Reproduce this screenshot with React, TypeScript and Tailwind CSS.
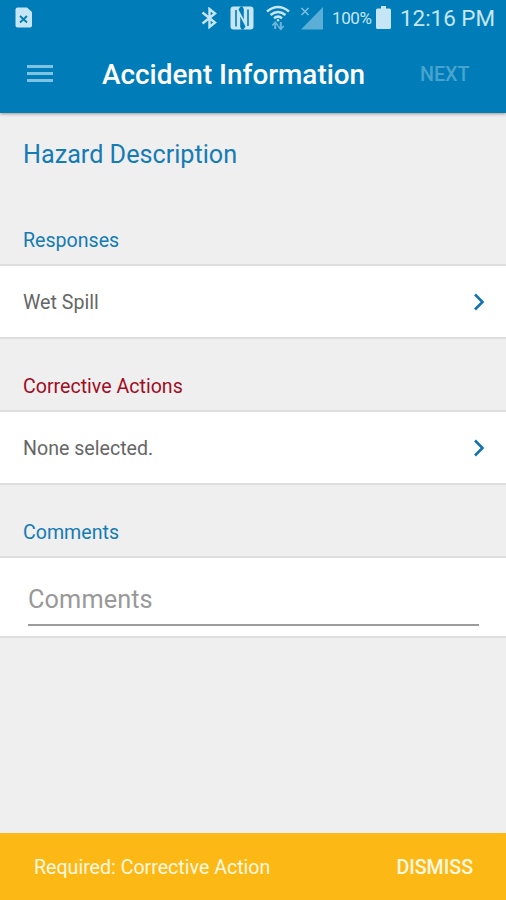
import React from "react";

function StatusBar() {
  return (
    <div className="flex h-9 items-center text-[#c6e6f6]">
      <svg className="ml-[15px] -mt-px h-[21px] w-[17px]" viewBox="0 0 17 21" aria-hidden="true">
        <path d="M2.5 0.5H12L17 5V18.5Q17 20.5 15 20.5H2.5Q0.5 20.5 0.5 18.5V2.5Q0.5 0.5 2.5 0.5Z" fill="currentColor" />
        <path d="M5 9L12 15.5M12 9L5 15.5" stroke="#007db8" strokeWidth="1.8" />
      </svg>
      <svg className="ml-[169px] -mt-px h-[22px] w-4" viewBox="0 0 16 22" fill="none" stroke="currentColor" strokeWidth="2.4" aria-hidden="true">
        <path d="M1.5 5.5L14 15.5L8.5 20V2L14 6.5L1.5 16.5" />
      </svg>
      <svg className="ml-[13px] -mt-px h-6 w-6" viewBox="0 0 24 24" aria-hidden="true">
        <rect x="0.5" y="0.5" width="23" height="23" rx="3" fill="currentColor" />
        <path d="M6 4V20.5M18 3.5V20" stroke="#007db8" strokeWidth="1.6" />
        <path d="M10.2 10.5L15.5 20.5L13.5 23.5H11.5L10.2 21Z" fill="#007db8" />
        <path d="M13.8 13.5L8.5 3.5L10.5 0.5H12.5L13.8 3Z" fill="#007db8" />
      </svg>
      <svg className="ml-[12px] -mt-px h-[26px] w-6" viewBox="0 0 24 26" fill="none" stroke="currentColor" aria-hidden="true">
        <path d="M1 6.5Q12 -2.5 23 6.5M4.5 10Q12 4 19.5 10M8 13.3Q12 10 16 13.3" strokeWidth="2.5" />
        <circle cx="12" cy="15.3" r="1.2" fill="currentColor" stroke="none" />
        <g opacity="0.55">
          <path d="M9.2 24V18M14.8 17V23" strokeWidth="2" />
          <path d="M6.3 20.5L9.2 17.3L12 20.5M12 21L14.8 24.2L17.7 21" strokeWidth="1.6" />
        </g>
      </svg>
      <svg className="ml-[10px] -mt-px h-6 w-6" viewBox="0 0 24 24" aria-hidden="true">
        <path d="M23 1V23.5H1Z" fill="#5bafd6" />
        <path d="M1.5 2L8.5 9M8.5 2L1.5 9" stroke="#7dc0df" strokeWidth="1.5" />
      </svg>
      <span className="ml-[8px] w-[41px] whitespace-nowrap text-[17px] leading-6 tracking-[-0.4px]">100%</span>
      <svg className="ml-[3px] -mt-px h-[23px] w-[15px]" viewBox="0 0 15 23" fill="currentColor" aria-hidden="true">
        <path d="M5 0H10V2.5H13.5Q15 2.5 15 4V21.5Q15 23 13.5 23H1.5Q0 23 0 21.5V4Q0 2.5 1.5 2.5H5Z" />
      </svg>
      <span className="ml-[9px] whitespace-nowrap text-[22.4px] leading-7">12:16 PM</span>
    </div>
  );
}

function Header() {
  return (
    <header className="relative z-10 h-[113px] shrink-0 bg-[#007db8] shadow-[0_1px_3px_rgba(70,30,20,0.45)]">
      <StatusBar />
      <div className="flex h-[77px] items-center">
        <button aria-label="Menu" className="ml-[27px] -mt-0.5 flex w-[26px] flex-col gap-1">
          <span className="h-[3px] bg-[#80c2e2]" />
          <span className="h-[3px] bg-[#80c2e2]" />
          <span className="h-[3px] bg-[#80c2e2]" />
        </button>
        <h1 className="ml-[49px] mt-px w-[270px] whitespace-nowrap text-[27.9px] font-medium leading-8 text-white">Accident Information</h1>
        <button className="ml-[48px] text-[19.7px] font-medium leading-6 text-[#48a3ce]">NEXT</button>
      </div>
    </header>
  );
}

function SectionLabel({ children, required = false }: { children: React.ReactNode; required?: boolean }) {
  return (
    <h3 className={`flex h-[71px] items-end px-[23px] pb-[9px] text-[19.6px] leading-7 ${required ? "text-[#a00d24]" : "text-[#147bb5]"}`}>
      {children}
    </h3>
  );
}

function SelectRow({ children }: { children: React.ReactNode }) {
  return (
    <div className="flex h-[75px] items-center justify-between border-y-2 border-[#dedede] bg-white pl-[23px] pr-[21px] text-[19.6px] text-[#666]">
      <span className="pt-0.5">{children}</span>
      <svg className="h-[18px] w-3" viewBox="0 0 12 18" fill="none" stroke="#1273b2" strokeWidth="2.6" aria-hidden="true">
        <path d="M2 1.5L9.5 9L2 16.5" />
      </svg>
    </div>
  );
}

export default function App() {
  return (
    <div className="flex h-[900px] w-[506px] flex-col overflow-hidden bg-[#efefef] font-[Roboto,sans-serif]">
      <Header />
      <main className="flex-1">
        <h2 className="h-[80px] px-[23px] pt-[26px] text-[25.2px] leading-8 text-[#147bb5]">Hazard Description</h2>
        <SectionLabel>Responses</SectionLabel>
        <SelectRow>Wet Spill</SelectRow>
        <SectionLabel required>Corrective Actions</SectionLabel>
        <SelectRow>None selected.</SelectRow>
        <SectionLabel>Comments</SectionLabel>
        <div className="h-[82px] border-y-2 border-[#dedede] bg-white px-7 pt-[22px]">
          <input
            aria-label="Comments"
            placeholder="Comments"
            className="block h-[46px] w-[451px] border-b-2 border-[#9c9c9c] pb-[6px] text-[25.3px] tracking-[0.1px] outline-none placeholder:text-[#999]"
          />
        </div>
      </main>
      <footer className="flex h-[67px] shrink-0 items-center justify-between bg-[#fcb814] pl-[34px] pr-[33px] pt-0.5 text-[19.6px] text-[#fff8e0]">
        <span>Required: Corrective Action</span>
        <button className="font-medium">DISMISS</button>
      </footer>
    </div>
  );
}
